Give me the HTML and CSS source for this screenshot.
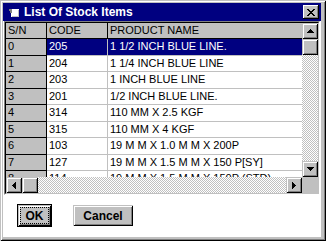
FILE: index.html
```html
<!DOCTYPE html>
<html>
<head>
<meta charset="utf-8">
<link rel="stylesheet" href="styles.css">
</head>
<body>
<div class="window">
  <div class="titlebar">
    <svg class="title-icon" width="12" height="11" viewBox="0 0 12 11" shape-rendering="crispEdges">
      <path fill="#fff" d="M3 2h8v8H3z"/>
      <path fill="#808080" d="M1 2h3v2H1zM2 4h2v2H2z"/>
      <path fill="#c0c0c0" d="M10 3h1v7h-1zM4 9h6v1H4z"/>
    </svg>
    <span class="title">List Of Stock Items</span>
    <span class="close">
      <svg width="8" height="7" viewBox="0 0 8 7" shape-rendering="crispEdges"><path fill="#000" d="M0 0h2v1H0zM6 0h2v1H6zM1 1h2v1H1zM5 1h2v1H5zM2 2h4v1H2zM3 3h2v1H3zM2 4h4v1H2zM1 5h2v1H1zM5 5h2v1H5zM0 6h2v1H0zM6 6h2v1H6z"/></svg>
    </span>
  </div>
  <div class="client">
    <div class="frame-outer">
      <div class="frame-inner">
        <div class="view">
          <div class="cells">
            <div class="table">
              <div class="c fx hd">S/N</div><div class="c hd">CODE</div><div class="c hd">PRODUCT NAME</div>
              <div class="c fx">0</div><div class="c sel">205</div><div class="c sel">1 1/2 INCH BLUE LINE.</div>
              <div class="c fx">1</div><div class="c">204</div><div class="c">1 1/4 INCH BLUE LINE</div>
              <div class="c fx">2</div><div class="c">203</div><div class="c">1 INCH BLUE LINE</div>
              <div class="c fx">3</div><div class="c">201</div><div class="c">1/2 INCH BLUE LINE.</div>
              <div class="c fx">4</div><div class="c">314</div><div class="c">110 MM X 2.5 KGF</div>
              <div class="c fx">5</div><div class="c">315</div><div class="c">110 MM X 4 KGF</div>
              <div class="c fx">6</div><div class="c">103</div><div class="c">19 M M X 1.0 M M X 200P</div>
              <div class="c fx">7</div><div class="c">127</div><div class="c">19 M M X 1.5 M M X 150 P[SY]</div>
              <div class="c fx">8</div><div class="c">114</div><div class="c">19 M M X 1.5 M M X 150P (STD)</div>
            </div>
          </div>
          <div class="vscroll">
            <span class="sbtn">
              <svg width="7" height="4" viewBox="0 0 7 4" shape-rendering="crispEdges"><path d="M3 0h1v1H3zM2 1h3v1H2zM1 2h5v1H1zM0 3h7v1H0z"/></svg>
            </span>
            <span class="sbtn"></span>
            <span class="track"></span>
            <span class="sbtn">
              <svg width="7" height="4" viewBox="0 0 7 4" shape-rendering="crispEdges"><path d="M0 0h7v1H0zM1 1h5v1H1zM2 2h3v1H2zM3 3h1v1H3z"/></svg>
            </span>
          </div>
        </div>
        <div class="hscroll">
          <span class="sbtn">
            <svg width="4" height="7" viewBox="0 0 4 7" shape-rendering="crispEdges"><path d="M0 3h1v1H0zM1 2h1v3H1zM2 1h1v5H2zM3 0h1v7H3z"/></svg>
          </span>
          <span class="sbtn"></span>
          <span class="track"></span>
          <span class="sbtn">
            <svg width="4" height="7" viewBox="0 0 4 7" shape-rendering="crispEdges"><path d="M0 0h1v7H0zM1 1h1v5H1zM2 2h1v3H2zM3 3h1v1H3z"/></svg>
          </span>
          <span class="corner"></span>
        </div>
      </div>
    </div>
    <div class="buttons">
      <span class="btn default"><span class="focus">OK</span></span>
      <span class="btn">Cancel</span>
    </div>
  </div>
</div>
</body>
</html>
```
FILE: styles.css
```css
html, body {
  margin: 0;
  padding: 0;
  background: #fff;
}
body {
  width: 326px;
  height: 241px;
  overflow: hidden;
  font-family: "Liberation Sans", Arial, sans-serif;
}
.window {
  box-sizing: border-box;
  width: 326px;
  height: 241px;
  background: #c0c0c0;
  padding: 3px 5px 4px 3px;
  display: flex;
  flex-direction: column;
  box-shadow: inset 1px 1px #c0c0c0, inset -1px -1px #000, inset 2px 2px #fff, inset -2px -2px #808080;
}
.titlebar {
  flex: none;
  height: 18px;
  background: #000080;
  color: #fff;
  display: flex;
  align-items: center;
  padding: 0 2px 0 5px;
}
.title-icon {
  display: block;
  margin-right: 4px;
}
.title {
  font-weight: bold;
  font-size: 12px;
  line-height: 18px;
}
.close {
  margin-left: auto;
  width: 16px;
  height: 14px;
  background: #c0c0c0;
  display: flex;
  align-items: center;
  justify-content: center;
  box-shadow: inset -1px -1px #000, inset 1px 1px #fff, inset -2px -2px #808080;
}
.client {
  flex: 1;
  background: #fff;
  padding: 0 1px 0 1px;
  display: flex;
  flex-direction: column;
}
.frame-outer {
  width: 316px;
  box-sizing: border-box;
  border: 1px solid;
  border-color: #808080 #fff #fff #808080;
}
.frame-inner {
  border: 1px solid;
  border-color: #000 #c0c0c0 #c0c0c0 #000;
}
.view {
  display: flex;
  height: 154px;
}
.cells {
  width: 296px;
  overflow: hidden;
}
.table {
  display: grid;
  grid-template-columns: 41px 61px 500px;
  grid-template-rows: 16px;
  grid-auto-rows: 16.5px;
  font-size: 11px;
  color: #000;
}
.c {
  box-sizing: border-box;
  border-right: 1px solid #c0c0c0;
  border-bottom: 1px solid #c0c0c0;
  padding-left: 2px;
  white-space: nowrap;
  overflow: hidden;
  line-height: 15.5px;
  background: #fff;
}
.fx, .hd {
  background: #c0c0c0;
  border-color: #000;
}
.hd {
  line-height: 15px;
}
.sel {
  background: #000080;
  color: #fff;
}
.vscroll {
  width: 16px;
  display: flex;
  flex-direction: column;
}
.hscroll {
  height: 16px;
  display: flex;
}
.sbtn {
  flex: none;
  width: 16px;
  height: 16px;
  box-sizing: border-box;
  background: #c0c0c0;
  display: flex;
  align-items: center;
  justify-content: center;
  box-shadow: inset 1px 1px #c0c0c0, inset -1px -1px #000, inset 2px 2px #fff, inset -2px -2px #808080;
}
.track {
  flex: 1;
  background: repeating-conic-gradient(#c0c0c0 0 25%, #fff 0 50%) 0 0 / 2px 2px;
}
.corner {
  width: 16px;
  background: #c0c0c0;
}
.buttons {
  display: flex;
  align-items: center;
  padding: 9px 0 0 13px;
}
.btn {
  box-sizing: border-box;
  height: 21px;
  width: 60px;
  background: #c0c0c0;
  font-weight: bold;
  font-size: 12px;
  display: flex;
  align-items: center;
  justify-content: center;
  box-shadow: inset 1px 1px #c0c0c0, inset -1px -1px #000, inset 2px 2px #fff, inset -2px -2px #808080;
}
.btn.default {
  width: 35px;
  height: 23px;
  margin-right: 21px;
  border: 1px solid #000;
  padding: 2px;
  align-items: stretch;
  justify-content: stretch;
}
.focus {
  flex: 1;
  display: flex;
  align-items: center;
  justify-content: center;
  border: 1px dotted #000;
}
```
